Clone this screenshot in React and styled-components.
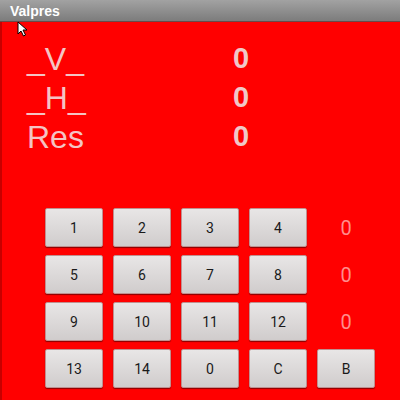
import React from "react";
import styled, { createGlobalStyle } from "styled-components";

const Global = createGlobalStyle`
  html, body { margin: 0; padding: 0; background: #ff0000; }
  body { font-family: Roboto, "Liberation Sans", sans-serif; }
`;

const Screen = styled.div`
  position: relative;
  width: 400px;
  height: 400px;
  display: flex;
  flex-direction: column;
  overflow: hidden;
`;

const TitleBar = styled.div`
  height: 21px;
  flex: none;
  display: flex;
  align-items: center;
  padding-left: 10px;
  background: linear-gradient(#a2a2a2, #7c7c7c);
  border-bottom: 1px solid #6a4a4a;
  color: #fff;
  font-family: "Liberation Sans", Arial, sans-serif;
  font-weight: bold;
  font-size: 14px;
`;

const Body = styled.div`
  flex: 1;
  background: #ff0000;
  border-left: 2px solid #c80000;
  padding: 17px 0 0 25px;
  display: flex;
  flex-direction: column;
`;

const Info = styled.div`
  display: grid;
  grid-template-columns: 206px auto;
  grid-auto-rows: 39px;
  align-items: center;
`;

const Label = styled.div`
  color: #f4c4c4;
  font-family: "Liberation Sans", Arial, sans-serif;
  font-size: 32px;
  line-height: 1;
`;

const Value = styled.div`
  color: #f0c8c8;
  font-size: 29px;
  font-weight: bold;
  font-family: "Liberation Sans", Arial, sans-serif;
  line-height: 1;
`;

const Pad = styled.div`
  margin: 52px 0 0 18px;
  display: grid;
  grid-template-columns: repeat(5, 58px);
  grid-auto-rows: 39px;
  column-gap: 10px;
  row-gap: 8px;
`;

const Key = styled.button`
  margin: 0;
  padding: 0;
  background: linear-gradient(#e8e6e6, #d0cccc);
  border: 1px solid #c09090;
  border-radius: 2px;
  box-shadow: 0 1px 1px #8a0000;
  color: #1a1a1a;
  font-family: Roboto, "Liberation Sans", sans-serif;
  font-size: 14px;
`;

const Count = styled.div`
  display: flex;
  align-items: center;
  justify-content: center;
  color: #ff8c8c;
  font-size: 20px;
`;

const Cursor = styled.svg`
  position: absolute;
  left: 17px;
  top: 21px;
`;

const rows = [
  ["1", "2", "3", "4"],
  ["5", "6", "7", "8"],
  ["9", "10", "11", "12"],
];

export default function App() {
  return (
    <Screen>
      <Global />
      <TitleBar>Valpres</TitleBar>
      <Body>
        <Info>
          <Label>_V_</Label>
          <Value>0</Value>
          <Label>_H_</Label>
          <Value>0</Value>
          <Label>Res</Label>
          <Value>0</Value>
        </Info>
        <Pad>
          {rows.map((r, i) => (
            <React.Fragment key={i}>
              {r.map((k) => (
                <Key key={k}>{k}</Key>
              ))}
              <Count>0</Count>
            </React.Fragment>
          ))}
          {["13", "14", "0", "C", "B"].map((k) => (
            <Key key={k}>{k}</Key>
          ))}
        </Pad>
      </Body>
      <Cursor width="12" height="16" viewBox="0 0 12 16">
        <path d="M1 1 L1 13 L4 10 L6.5 15 L8.5 14 L6 9 L10 9 Z" fill="#fff" stroke="#000" strokeWidth="1" />
      </Cursor>
    </Screen>
  );
}
